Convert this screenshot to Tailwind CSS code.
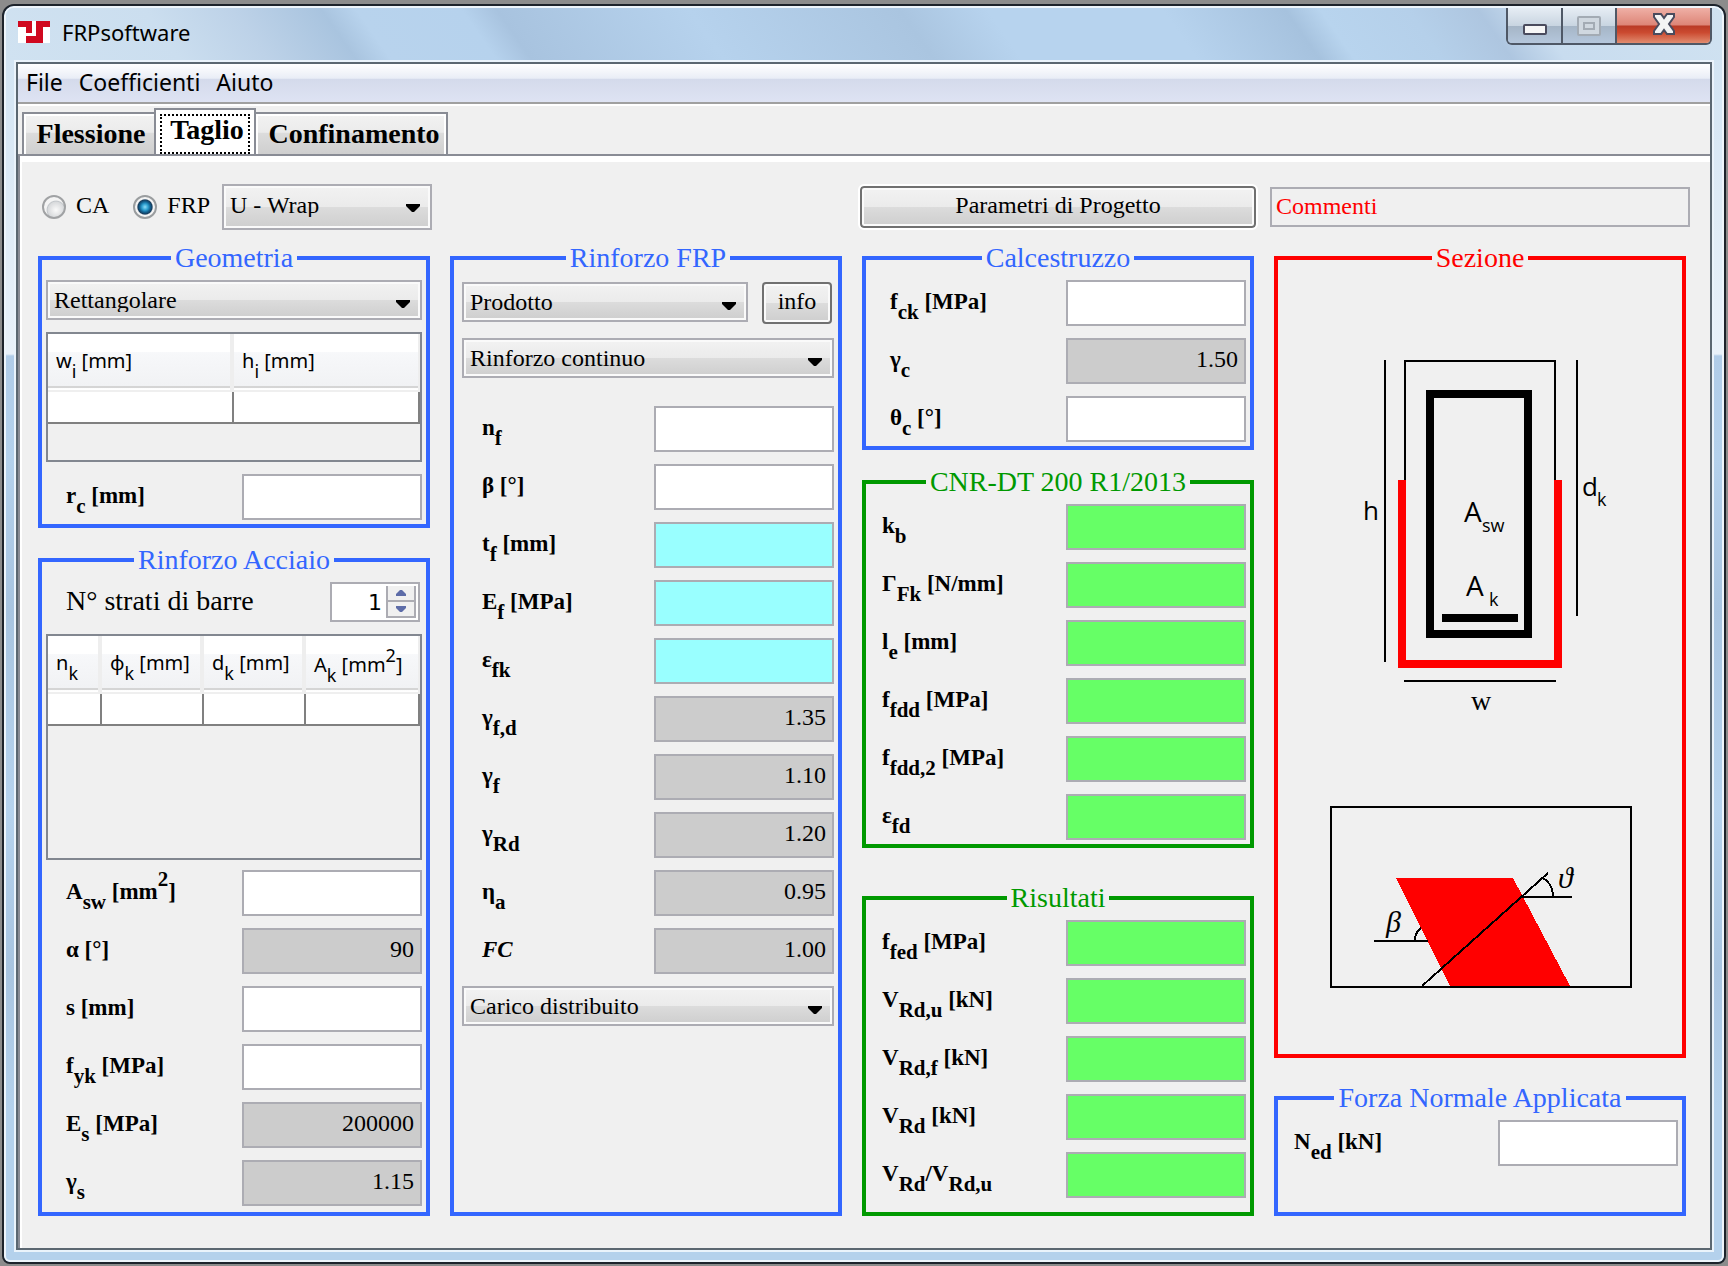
<!DOCTYPE html>
<html lang="it">
<head>
    <meta charset="UTF-8">
    <meta name="viewport" content="width=device-width, initial-scale=1.0">
    <title>FRPsoftware</title>
    <script src="https://cdn.jsdelivr.net/npm/@tailwindcss/browser@4"></script>
</head>
<body class="bg-[#8c8c8c] min-h-screen flex pt-1 px-0.5 pb-0.5 text-black font-['Liberation_Serif',serif]">

    <div class="flex-1 flex flex-col rounded-t-xl rounded-b-lg border-2 border-[#1d232b] overflow-hidden bg-[#b4d0eb]">
        <div class="flex-1 flex flex-col rounded-t-[10px] rounded-b-md border-2 border-[#eef5fb] bg-[linear-gradient(180deg,#cfe2f2_0px,#e9f1f9_346px,#b0cce8_348px,#b4d1ec_450px,#a8c4e0_600px,#b6d3ee_800px,#a8c4e0_960px,#b4d1ec_1100px)] px-2 pb-2">

            <!-- title bar -->
            <header class="-mx-2 pl-3 pr-2.5 h-[52px] flex items-start justify-between rounded-t-lg bg-[linear-gradient(55deg,#d0e2f1_0%,#cbdeef_10%,#bdd2e8_15%,#a9c4df_20%,#b8d3ed_22%,#b6d2ed_28%,#a8c3df_30%,#b6d2ed_41%,#aac5e0_53%,#b7d3ee_58%,#b7d3ee_68%,#a6c2de_75%,#b8d4ee_77%,#b5d0ea_82%,#aec6e0_86%,#c8dcef_89%,#d0e2f1_100%)]">
                <div class="flex items-center gap-3 h-12">
                    <svg class="w-8 h-[22px]" viewBox="0 0 32 22" shape-rendering="crispEdges" aria-hidden="true">
                        <rect width="32" height="22" fill="#fff"/>
                        <path d="M0 0H14V12H8V6H0ZM18 0H32V6H25V22H8V15H18Z" fill="#d0081f"/>
                    </svg>
                    <h1 class="text-[22px] leading-none font-['Noto_Sans',sans-serif]">FRPsoftware</h1>
                </div>
                <div class="flex h-[37px] rounded-b-md border-2 border-t-0 border-[#4f5866] overflow-hidden">
                    <button type="button" aria-label="Riduci a icona" class="w-[55px] flex justify-center items-end pb-2 border-r-2 border-[#4f5866] bg-[linear-gradient(180deg,#e6edf4_0%,#c9d5e1_50%,#a5b5c6_51%,#b5c7dc_100%)]">
                        <svg class="w-6 h-[11px]" viewBox="0 0 24 11" aria-hidden="true"><rect x="1" y="1" width="22" height="9" rx="1" fill="#f6f6f6" stroke="#4a4b5d" stroke-width="2"/></svg>
                    </button>
                    <button type="button" aria-label="Ingrandisci" class="w-[54px] flex justify-center items-center border-r-2 border-[#4f5866] bg-[linear-gradient(180deg,#e6edf4_0%,#c9d5e1_50%,#a5b5c6_51%,#b5c7dc_100%)]">
                        <svg class="w-6 h-5" viewBox="0 0 24 20" fill="none" stroke="#a3abb4" stroke-width="2" aria-hidden="true"><rect x="1" y="1" width="22" height="18" rx="1" fill="#d0d8e0"/><rect x="7" y="7" width="10" height="6"/></svg>
                    </button>
                    <button type="button" aria-label="Chiudi" class="w-[93px] flex justify-center items-center pb-1 bg-[linear-gradient(180deg,#efb0a6_0%,#dd8577_49%,#b93a26_51%,#cb4a30_70%,#e18c70_100%)]">
                        <svg class="w-[22px] h-[22px]" viewBox="0 0 22 22" aria-hidden="true"><path d="M1 1H8L11 5L14 1H21V4L16 11L21 18V21H14L11 17L8 21H1V18L6 11L1 4Z" fill="#f4f4f4" stroke="#4a4b5d" stroke-width="2"/></svg>
                    </button>
                </div>
            </header>

            <div class="flex-1 flex flex-col border-2 border-[#eaf3fb]">
            <div class="flex-1 flex flex-col border-2 border-[#5b6771] bg-[#f0f0f0]">

                <!-- menu -->
                <nav class="h-[42px] shrink-0 flex items-center gap-4 pl-2 pb-1 border-b-2 border-white shadow-[inset_0_-2px_0_#a0a0a0] bg-[linear-gradient(180deg,#ffffff_0%,#e9edf6_36%,#d4daeb_37%,#dfe4f4_100%)] text-[23px] leading-none font-['Noto_Sans',sans-serif]">
                    <button type="button">File</button>
                    <button type="button">Coefficienti</button>
                    <button type="button">Aiuto</button>
                </nav>

                <!-- tabs -->
                <div role="tablist" class="h-12 shrink-0 flex items-end pl-1 text-[28px] leading-none font-bold">
                    <button type="button" role="tab" class="w-[132px] h-[42px] pl-1 border-2 border-b-0 border-r-0 border-[#898c95] shadow-[inset_2px_2px_0_#fff] bg-[linear-gradient(180deg,#f2f2f2_0%,#ebebeb_46%,#dcdcdc_47%,#cfcfcf_100%)]">Flessione</button>
                    <button type="button" role="tab" aria-selected="true" class="w-[102px] h-12 -mb-0.5 p-1 pb-0.5 border-2 border-b-0 border-[#898c95] bg-white"><span class="block h-10 pl-1 border-2 border-dotted border-black">Taglio</span></button>
                    <button type="button" role="tab" class="w-48 h-[42px] pl-1.5 border-2 border-b-0 border-l-0 border-[#898c95] shadow-[inset_2px_2px_0_#fff,inset_-2px_0_0_#fff] bg-[linear-gradient(180deg,#f2f2f2_0%,#ebebeb_46%,#dcdcdc_47%,#cfcfcf_100%)]">Confinamento</button>
                </div>

                <main class="flex-1 flex flex-col gap-4 border-t-2 border-l-2 border-[#898c95] shadow-[inset_2px_6px_0_#fff] pt-7 pl-[18px] pr-6 pb-8 text-[24px] leading-none">

                    <!-- top controls -->
                    <div class="grid grid-cols-[392fr_392fr_392fr_412fr] gap-5 items-center">
                        <div class="h-[46px] flex items-center pl-1 -mr-0.5">
                            <input type="radio" id="ca" name="tipo" class="appearance-none size-6 rounded-full border-2 border-[#a0a2a4] bg-[radial-gradient(circle_at_60%_65%,#fafafa_0%,#d8dadc_45%,#c3c7cb_50%,#f4f4f4_56%)]">
                            <label for="ca" class="pl-2.5 pb-1">CA</label>
                            <input type="radio" id="frp" name="tipo" checked class="ml-6 appearance-none size-6 rounded-full border-2 border-[#9a9d9f] bg-[radial-gradient(circle_at_50%_50%,#8fdcf7_0%,#2d9fd0_22%,#12608f_38%,#173c5c_50%,#f4f4f4_58%)]">
                            <label for="frp" class="pl-2.5 pb-1">FRP</label>
                            <div class="relative w-[210px] ml-auto">
                                <select aria-label="Configurazione" class="appearance-none w-full h-[46px] pl-1.5 pb-1 border-2 border-[#acacb3] shadow-[inset_0_0_0_2px_#fafafa] bg-[linear-gradient(180deg,#f2f2f2_0%,#ebebeb_49%,#dcdcdc_50%,#cecece_100%)]"><option>U - Wrap</option></select>
                                <svg class="absolute right-3 top-5 w-3.5 h-2 pointer-events-none" viewBox="0 0 14 8" aria-hidden="true"><path d="M0 0H14V2L8 8H6L0 2Z"/></svg>
                            </div>
                        </div>
                        <div></div>
                        <button type="button" class="h-[42px] -mx-0.5 pb-1 rounded-[4px] border-2 border-[#707070] shadow-[inset_0_0_0_2px_#fafafa] outline-2 outline-white bg-[linear-gradient(180deg,#f2f2f2_0%,#ebebeb_49%,#dcdcdc_50%,#cecece_100%)]">Parametri di Progetto</button>
                        <input type="text" aria-label="Commenti" value="Commenti" class="h-10 -mx-1 pl-1 pb-0.5 border-2 border-[#acacb3] bg-[#f0f0f0] text-[#ff0000] min-w-0">
                    </div>

                    <div class="flex-1 grid grid-cols-[392fr_392fr_392fr_412fr] gap-5">

                        <!-- column 1 -->
                        <div class="flex flex-col gap-5">
                            <fieldset class="border-4 border-[#3366ff] px-1 pb-1">
                                <legend class="mx-auto px-1 text-[28px] leading-6 text-[#3366ff]">Geometria</legend>
                                <div class="flex flex-col gap-3 pt-2.5">
                                    <div class="relative">
                                        <select aria-label="Forma" class="appearance-none w-full h-10 pl-1.5 border-2 border-[#acacb3] shadow-[inset_0_0_0_2px_#fafafa] bg-[linear-gradient(180deg,#f2f2f2_0%,#ebebeb_49%,#dcdcdc_50%,#cecece_100%)]"><option>Rettangolare</option></select>
                                        <svg class="absolute right-3 top-5 w-3.5 h-2 pointer-events-none" viewBox="0 0 14 8" aria-hidden="true"><path d="M0 0H14V2L8 8H6L0 2Z"/></svg>
                                    </div>
                                    <div class="h-[130px] border-2 border-[#828790]">
                                        <table class="w-full table-fixed border-separate border-spacing-0 font-['Noto_Sans',sans-serif] text-[20px]">
                                            <thead>
                                                <tr class="h-[58px] text-left bg-[linear-gradient(180deg,#ffffff_0%,#ffffff_31%,#f7f8fa_32%,#f1f2f4_89%,#d5d5d5_90%,#d5d5d5_93%,#ffffff_94%,#ffffff_96%,#efefef_97%)]">
                                                    <th class="pl-2 pb-1 font-normal border-r-4 border-[#eeeeee]">w<sub class="text-[18px] leading-0 align-[-5px]">i</sub> [mm]</th>
                                                    <th class="pl-2 pb-1 font-normal border-r-2 border-[#eeeeee]">h<sub class="text-[18px] leading-0 align-[-5px]">i</sub> [mm]</th>
                                                </tr>
                                            </thead>
                                            <tbody>
                                                <tr class="h-8 bg-white">
                                                    <td class="border-r-2 border-b-2 border-[#808080]"></td>
                                                    <td class="border-r-2 border-b-2 border-[#808080]"></td>
                                                </tr>
                                            </tbody>
                                        </table>
                                    </div>
                                    <div class="flex items-center justify-between pl-5">
                                        <label for="rc" class="pb-1 text-[23px] font-bold">r<sub class="text-[21px] leading-0 align-[-5px]">c</sub> [mm]</label>
                                        <input type="text" id="rc" class="w-[180px] h-[46px] border-2 border-[#acacb3] bg-white">
                                    </div>
                                </div>
                            </fieldset>

                            <fieldset class="flex-1 border-4 border-[#3366ff] px-1 pb-1.5">
                                <legend class="mx-auto px-1 text-[28px] leading-6 text-[#3366ff]">Rinforzo Acciaio</legend>
                                <div class="flex items-center justify-between pl-5 pr-0.5 pt-2.5">
                                    <label for="strati" class="pb-0.5 text-[28px]">N° strati di barre</label>
                                    <div class="flex w-[90px] h-10 border-2 border-[#acacb3] bg-white pr-0.5 py-0.5">
                                        <input type="text" id="strati" value="1" class="min-w-0 flex-1 pr-1 text-right text-[22px] font-['DejaVu_Sans',sans-serif]">
                                        <div class="w-[30px] flex flex-col border-2 border-t-0 border-[#acacb3]">
                                            <button type="button" aria-label="Aumenta" class="flex-1 flex items-center justify-center border-b-2 border-[#acacb3] bg-[#f0f0f0]"><svg class="w-2.5 h-1.5" viewBox="0 0 10 6" aria-hidden="true"><path d="M4 0H6L10 4V6H0V4Z" fill="#5d6ca8"/></svg></button>
                                            <button type="button" aria-label="Diminuisci" class="flex-1 flex items-center justify-center bg-[#f0f0f0]"><svg class="w-2.5 h-1.5" viewBox="0 0 10 6" aria-hidden="true"><path d="M0 0H10V2L6 6H4L0 2Z" fill="#5d6ca8"/></svg></button>
                                        </div>
                                    </div>
                                </div>
                                <div class="mt-3 mb-2.5 h-[226px] border-2 border-[#828790]">
                                    <table class="w-full table-fixed border-separate border-spacing-0 font-['Noto_Sans',sans-serif] text-[20px]">
                                        <thead>
                                            <tr class="h-[58px] text-left whitespace-nowrap bg-[linear-gradient(180deg,#ffffff_0%,#ffffff_31%,#f7f8fa_32%,#f1f2f4_89%,#d5d5d5_90%,#d5d5d5_93%,#ffffff_94%,#ffffff_96%,#efefef_97%)]">
                                                <th class="w-[54px] pl-2 pb-1 font-normal border-r-4 border-[#eeeeee]">n<sub class="text-[18px] leading-0 align-[-5px]">k</sub></th>
                                                <th class="w-[102px] pl-2 pb-1 font-normal border-r-4 border-[#eeeeee]">ϕ<sub class="text-[18px] leading-0 align-[-5px]">k</sub> [mm]</th>
                                                <th class="w-[102px] pl-2 pb-1 font-normal border-r-4 border-[#eeeeee]">d<sub class="text-[18px] leading-0 align-[-5px]">k</sub> [mm]</th>
                                                <th class="pl-2 font-normal border-r-2 border-[#eeeeee]">A<sub class="text-[18px] leading-0 align-[-5px]">k</sub> [mm<sup class="text-[18px] leading-0 align-[1px]">2</sup>]</th>
                                            </tr>
                                        </thead>
                                        <tbody>
                                            <tr class="h-8 bg-white">
                                                <td class="border-r-2 border-b-2 border-[#808080]"></td>
                                                <td class="border-r-2 border-b-2 border-[#808080]"></td>
                                                <td class="border-r-2 border-b-2 border-[#808080]"></td>
                                                <td class="border-r-2 border-b-2 border-[#808080]"></td>
                                            </tr>
                                        </tbody>
                                    </table>
                                </div>
                                <div class="flex flex-col gap-3">
                                    <div class="flex items-center justify-between pl-5">
                                        <label for="asw" class="pb-1 text-[23px] font-bold">A<sub class="text-[21px] leading-0 align-[-5px]">sw</sub> [mm<sup class="text-[21px] leading-0 align-[2px]">2</sup>]</label>
                                        <input type="text" id="asw" class="w-[180px] h-[46px] border-2 border-[#acacb3] bg-white">
                                    </div>
                                    <div class="flex items-center justify-between pl-5">
                                        <label for="alfa" class="pb-1 text-[23px] font-bold">α [°]</label>
                                        <input type="text" id="alfa" value="90" class="w-[180px] h-[46px] pr-1.5 pb-1 text-right border-2 border-[#acacb3] bg-[#cccccc]">
                                    </div>
                                    <div class="flex items-center justify-between pl-5">
                                        <label for="s" class="pb-1 text-[23px] font-bold">s [mm]</label>
                                        <input type="text" id="s" class="w-[180px] h-[46px] border-2 border-[#acacb3] bg-white">
                                    </div>
                                    <div class="flex items-center justify-between pl-5">
                                        <label for="fyk" class="pb-1 text-[23px] font-bold">f<sub class="text-[21px] leading-0 align-[-5px]">yk</sub> [MPa]</label>
                                        <input type="text" id="fyk" class="w-[180px] h-[46px] border-2 border-[#acacb3] bg-white">
                                    </div>
                                    <div class="flex items-center justify-between pl-5">
                                        <label for="es" class="pb-1 text-[23px] font-bold">E<sub class="text-[21px] leading-0 align-[-5px]">s</sub> [MPa]</label>
                                        <input type="text" id="es" value="200000" class="w-[180px] h-[46px] pr-1.5 pb-1 text-right border-2 border-[#acacb3] bg-[#cccccc]">
                                    </div>
                                    <div class="flex items-center justify-between pl-5">
                                        <label for="gs" class="pb-1 text-[23px] font-bold">γ<sub class="text-[21px] leading-0 align-[-5px]">s</sub></label>
                                        <input type="text" id="gs" value="1.15" class="w-[180px] h-[46px] pr-1.5 pb-1 text-right border-2 border-[#acacb3] bg-[#cccccc]">
                                    </div>
                                </div>
                            </fieldset>
                        </div>

                        <!-- column 2 -->
                        <fieldset class="border-4 border-[#3366ff] pl-2 pr-1">
                            <legend class="mx-auto px-1 text-[28px] leading-6 text-[#3366ff]">Rinforzo FRP</legend>
                            <div class="flex gap-3.5 pt-3 pr-0.5">
                                <div class="relative flex-1">
                                    <select aria-label="Prodotto" class="appearance-none w-full h-10 pl-1.5 border-2 border-[#acacb3] shadow-[inset_0_0_0_2px_#fafafa] bg-[linear-gradient(180deg,#f2f2f2_0%,#ebebeb_49%,#dcdcdc_50%,#cecece_100%)]"><option>Prodotto</option></select>
                                    <svg class="absolute right-3 top-5 w-3.5 h-2 pointer-events-none" viewBox="0 0 14 8" aria-hidden="true"><path d="M0 0H14V2L8 8H6L0 2Z"/></svg>
                                </div>
                                <button type="button" class="w-[70px] h-[42px] pb-1 rounded-[4px] border-2 border-[#707070] shadow-[inset_0_0_0_2px_#fafafa] bg-[linear-gradient(180deg,#f2f2f2_0%,#ebebeb_49%,#dcdcdc_50%,#cecece_100%)]">info</button>
                            </div>
                            <div class="relative mt-3.5">
                                <select aria-label="Tipo di rinforzo" class="appearance-none w-full h-10 pl-1.5 border-2 border-[#acacb3] shadow-[inset_0_0_0_2px_#fafafa] bg-[linear-gradient(180deg,#f2f2f2_0%,#ebebeb_49%,#dcdcdc_50%,#cecece_100%)]"><option>Rinforzo continuo</option></select>
                                <svg class="absolute right-3 top-5 w-3.5 h-2 pointer-events-none" viewBox="0 0 14 8" aria-hidden="true"><path d="M0 0H14V2L8 8H6L0 2Z"/></svg>
                            </div>
                            <div class="flex flex-col gap-3 mt-7">
                                <div class="flex items-center justify-between pl-5">
                                    <label for="nf" class="pb-1 text-[23px] font-bold">n<sub class="text-[21px] leading-0 align-[-5px]">f</sub></label>
                                    <input type="text" id="nf" class="w-[180px] h-[46px] border-2 border-[#acacb3] bg-white">
                                </div>
                                <div class="flex items-center justify-between pl-5">
                                    <label for="beta" class="pb-1 text-[23px] font-bold">β [°]</label>
                                    <input type="text" id="beta" class="w-[180px] h-[46px] border-2 border-[#acacb3] bg-white">
                                </div>
                                <div class="flex items-center justify-between pl-5">
                                    <label for="tf" class="pb-1 text-[23px] font-bold">t<sub class="text-[21px] leading-0 align-[-5px]">f</sub> [mm]</label>
                                    <input type="text" id="tf" class="w-[180px] h-[46px] border-2 border-[#acacb3] bg-[#99ffff]">
                                </div>
                                <div class="flex items-center justify-between pl-5">
                                    <label for="ef" class="pb-1 text-[23px] font-bold">E<sub class="text-[21px] leading-0 align-[-5px]">f</sub> [MPa]</label>
                                    <input type="text" id="ef" class="w-[180px] h-[46px] border-2 border-[#acacb3] bg-[#99ffff]">
                                </div>
                                <div class="flex items-center justify-between pl-5">
                                    <label for="efk" class="pb-1 text-[23px] font-bold">ε<sub class="text-[21px] leading-0 align-[-5px]">fk</sub></label>
                                    <input type="text" id="efk" class="w-[180px] h-[46px] border-2 border-[#acacb3] bg-[#99ffff]">
                                </div>
                                <div class="flex items-center justify-between pl-5">
                                    <label for="gfd" class="pb-1 text-[23px] font-bold">γ<sub class="text-[21px] leading-0 align-[-5px]">f,d</sub></label>
                                    <input type="text" id="gfd" value="1.35" class="w-[180px] h-[46px] pr-1.5 pb-1 text-right border-2 border-[#acacb3] bg-[#cccccc]">
                                </div>
                                <div class="flex items-center justify-between pl-5">
                                    <label for="gf" class="pb-1 text-[23px] font-bold">γ<sub class="text-[21px] leading-0 align-[-5px]">f</sub></label>
                                    <input type="text" id="gf" value="1.10" class="w-[180px] h-[46px] pr-1.5 pb-1 text-right border-2 border-[#acacb3] bg-[#cccccc]">
                                </div>
                                <div class="flex items-center justify-between pl-5">
                                    <label for="grd" class="pb-1 text-[23px] font-bold">γ<sub class="text-[21px] leading-0 align-[-5px]">Rd</sub></label>
                                    <input type="text" id="grd" value="1.20" class="w-[180px] h-[46px] pr-1.5 pb-1 text-right border-2 border-[#acacb3] bg-[#cccccc]">
                                </div>
                                <div class="flex items-center justify-between pl-5">
                                    <label for="eta" class="pb-1 text-[23px] font-bold">η<sub class="text-[21px] leading-0 align-[-5px]">a</sub></label>
                                    <input type="text" id="eta" value="0.95" class="w-[180px] h-[46px] pr-1.5 pb-1 text-right border-2 border-[#acacb3] bg-[#cccccc]">
                                </div>
                                <div class="flex items-center justify-between pl-5">
                                    <label for="fc" class="pb-1 text-[23px] font-bold italic">FC</label>
                                    <input type="text" id="fc" value="1.00" class="w-[180px] h-[46px] pr-1.5 pb-1 text-right border-2 border-[#acacb3] bg-[#cccccc]">
                                </div>
                                <div class="relative">
                                    <select aria-label="Tipo di carico" class="appearance-none w-full h-10 pl-1.5 border-2 border-[#acacb3] shadow-[inset_0_0_0_2px_#fafafa] bg-[linear-gradient(180deg,#f2f2f2_0%,#ebebeb_49%,#dcdcdc_50%,#cecece_100%)]"><option>Carico distribuito</option></select>
                                    <svg class="absolute right-3 top-5 w-3.5 h-2 pointer-events-none" viewBox="0 0 14 8" aria-hidden="true"><path d="M0 0H14V2L8 8H6L0 2Z"/></svg>
                                </div>
                            </div>
                        </fieldset>

                        <!-- column 3 -->
                        <div class="flex flex-col">
                            <fieldset class="border-4 border-[#3366ff] px-1 pb-1">
                                <legend class="mx-auto px-1 text-[28px] leading-6 text-[#3366ff]">Calcestruzzo</legend>
                                <div class="flex flex-col gap-3 pt-2.5">
                                    <div class="flex items-center justify-between pl-5">
                                        <label for="fck" class="pb-1 text-[23px] font-bold">f<sub class="text-[21px] leading-0 align-[-5px]">ck</sub> [MPa]</label>
                                        <input type="text" id="fck" class="w-[180px] h-[46px] border-2 border-[#acacb3] bg-white">
                                    </div>
                                    <div class="flex items-center justify-between pl-5">
                                        <label for="gc" class="pb-1 text-[23px] font-bold">γ<sub class="text-[21px] leading-0 align-[-5px]">c</sub></label>
                                        <input type="text" id="gc" value="1.50" class="w-[180px] h-[46px] pr-1.5 pb-1 text-right border-2 border-[#acacb3] bg-[#cccccc]">
                                    </div>
                                    <div class="flex items-center justify-between pl-5">
                                        <label for="tc" class="pb-1 text-[23px] font-bold">θ<sub class="text-[21px] leading-0 align-[-5px]">c</sub> [°]</label>
                                        <input type="text" id="tc" class="w-[180px] h-[46px] border-2 border-[#acacb3] bg-white">
                                    </div>
                                </div>
                            </fieldset>

                            <fieldset class="mt-5 border-4 border-[#009900] px-1 pb-1">
                                <legend class="mx-auto px-1 text-[28px] leading-6 text-[#009900]">CNR-DT 200 R1/2013</legend>
                                <div class="flex flex-col gap-3 pt-2.5">
                                    <div class="flex items-center justify-between pl-3">
                                        <label for="kb" class="pb-1 text-[23px] font-bold">k<sub class="text-[21px] leading-0 align-[-5px]">b</sub></label>
                                        <input type="text" id="kb" readonly class="w-[180px] h-[46px] border-2 border-[#acacb3] bg-[#66ff66]">
                                    </div>
                                    <div class="flex items-center justify-between pl-3">
                                        <label for="gfk" class="pb-1 text-[23px] font-bold">Γ<sub class="text-[21px] leading-0 align-[-5px]">Fk</sub> [N/mm]</label>
                                        <input type="text" id="gfk" readonly class="w-[180px] h-[46px] border-2 border-[#acacb3] bg-[#66ff66]">
                                    </div>
                                    <div class="flex items-center justify-between pl-3">
                                        <label for="le" class="pb-1 text-[23px] font-bold">l<sub class="text-[21px] leading-0 align-[-5px]">e</sub> [mm]</label>
                                        <input type="text" id="le" readonly class="w-[180px] h-[46px] border-2 border-[#acacb3] bg-[#66ff66]">
                                    </div>
                                    <div class="flex items-center justify-between pl-3">
                                        <label for="ffdd" class="pb-1 text-[23px] font-bold">f<sub class="text-[21px] leading-0 align-[-5px]">fdd</sub> [MPa]</label>
                                        <input type="text" id="ffdd" readonly class="w-[180px] h-[46px] border-2 border-[#acacb3] bg-[#66ff66]">
                                    </div>
                                    <div class="flex items-center justify-between pl-3">
                                        <label for="ffdd2" class="pb-1 text-[23px] font-bold">f<sub class="text-[21px] leading-0 align-[-5px]">fdd,2</sub> [MPa]</label>
                                        <input type="text" id="ffdd2" readonly class="w-[180px] h-[46px] border-2 border-[#acacb3] bg-[#66ff66]">
                                    </div>
                                    <div class="flex items-center justify-between pl-3">
                                        <label for="efd" class="pb-1 text-[23px] font-bold">ε<sub class="text-[21px] leading-0 align-[-5px]">fd</sub></label>
                                        <input type="text" id="efd" readonly class="w-[180px] h-[46px] border-2 border-[#acacb3] bg-[#66ff66]">
                                    </div>
                                </div>
                            </fieldset>

                            <fieldset class="mt-[38px] flex-1 border-4 border-[#009900] px-1 pb-1">
                                <legend class="mx-auto px-1 text-[28px] leading-6 text-[#009900]">Risultati</legend>
                                <div class="flex flex-col gap-3 pt-2.5">
                                    <div class="flex items-center justify-between pl-3">
                                        <label for="ffed" class="pb-1 text-[23px] font-bold">f<sub class="text-[21px] leading-0 align-[-5px]">fed</sub> [MPa]</label>
                                        <input type="text" id="ffed" readonly class="w-[180px] h-[46px] border-2 border-[#acacb3] bg-[#66ff66]">
                                    </div>
                                    <div class="flex items-center justify-between pl-3">
                                        <label for="vrdu" class="pb-1 text-[23px] font-bold">V<sub class="text-[21px] leading-0 align-[-5px]">Rd,u</sub> [kN]</label>
                                        <input type="text" id="vrdu" readonly class="w-[180px] h-[46px] border-2 border-[#acacb3] bg-[#66ff66]">
                                    </div>
                                    <div class="flex items-center justify-between pl-3">
                                        <label for="vrdf" class="pb-1 text-[23px] font-bold">V<sub class="text-[21px] leading-0 align-[-5px]">Rd,f</sub> [kN]</label>
                                        <input type="text" id="vrdf" readonly class="w-[180px] h-[46px] border-2 border-[#acacb3] bg-[#66ff66]">
                                    </div>
                                    <div class="flex items-center justify-between pl-3">
                                        <label for="vrd" class="pb-1 text-[23px] font-bold">V<sub class="text-[21px] leading-0 align-[-5px]">Rd</sub> [kN]</label>
                                        <input type="text" id="vrd" readonly class="w-[180px] h-[46px] border-2 border-[#acacb3] bg-[#66ff66]">
                                    </div>
                                    <div class="flex items-center justify-between pl-3">
                                        <label for="ratio" class="pb-1 text-[23px] font-bold">V<sub class="text-[21px] leading-0 align-[-5px]">Rd</sub>/V<sub class="text-[21px] leading-0 align-[-5px]">Rd,u</sub></label>
                                        <input type="text" id="ratio" readonly class="w-[180px] h-[46px] border-2 border-[#acacb3] bg-[#66ff66]">
                                    </div>
                                </div>
                            </fieldset>
                        </div>

                        <!-- column 4 -->
                        <div class="flex flex-col gap-7">
                            <fieldset class="border-4 border-[#ff0000]">
                                <legend class="mx-auto px-1 text-[28px] leading-6 text-[#ff0000]">Sezione</legend>
                                <svg class="block w-full" viewBox="0 0 404 784" role="img" aria-label="Sezione">
                                    <!-- cross section -->
                                    <g fill="none" stroke="#000" stroke-width="2" shape-rendering="crispEdges">
                                        <path d="M107 90V392M127 210V91H277V210M299 90V346M126 411H278"/>
                                        <rect x="152" y="124" width="98" height="240" stroke-width="8"/>
                                        <path d="M164 348H240" stroke-width="8"/>
                                        <path d="M124 210V394H280V210" stroke="#ff0000" stroke-width="8"/>
                                    </g>
                                    <g class="font-['Open_Sans',sans-serif]">
                                        <text x="85" y="250" font-size="26">h</text>
                                        <text x="304" y="226" font-size="26">d</text>
                                        <text x="319" y="236" font-size="18">k</text>
                                        <text x="186" y="252" font-size="28">A</text>
                                        <text x="204" y="262" font-size="18">sw</text>
                                        <text x="188" y="326" font-size="28">A</text>
                                        <text x="211" y="336" font-size="18">k</text>
                                    </g>
                                    <text x="193" y="440" font-size="28">w</text>
                                    <!-- side view -->
                                    <path d="M118 608H235L292 716H172Z" fill="#ff0000" shape-rendering="crispEdges"/>
                                    <rect x="53" y="537" width="300" height="180" fill="none" stroke="#000" stroke-width="2" shape-rendering="crispEdges"/>
                                    <g fill="none" stroke="#000" stroke-width="2" shape-rendering="crispEdges">
                                        <path d="M144 716L270 603M96 671H150M244 627H294"/>
                                        <path d="M275 626C275 618 271 611 265 608M137 670C137 665 139 661 143 658"/>
                                    </g>
                                    <g class="italic" font-size="30">
                                        <text x="108" y="662">β</text>
                                        <text x="280" y="618">ϑ</text>
                                    </g>
                                </svg>
                            </fieldset>

                            <fieldset class="flex-1 border-4 border-[#3366ff] px-1">
                                <legend class="mx-auto px-1 text-[28px] leading-6 text-[#3366ff]">Forza Normale Applicata</legend>
                                <div class="flex items-center justify-between pl-3 pt-2.5">
                                    <label for="ned" class="pb-1 text-[23px] font-bold">N<sub class="text-[21px] leading-0 align-[-5px]">ed</sub> [kN]</label>
                                    <input type="text" id="ned" class="w-[180px] h-[46px] border-2 border-[#acacb3] bg-white">
                                </div>
                            </fieldset>
                        </div>
                    </div>
                </main>
            </div>
            </div>
        </div>
    </div>

</body>
</html>
